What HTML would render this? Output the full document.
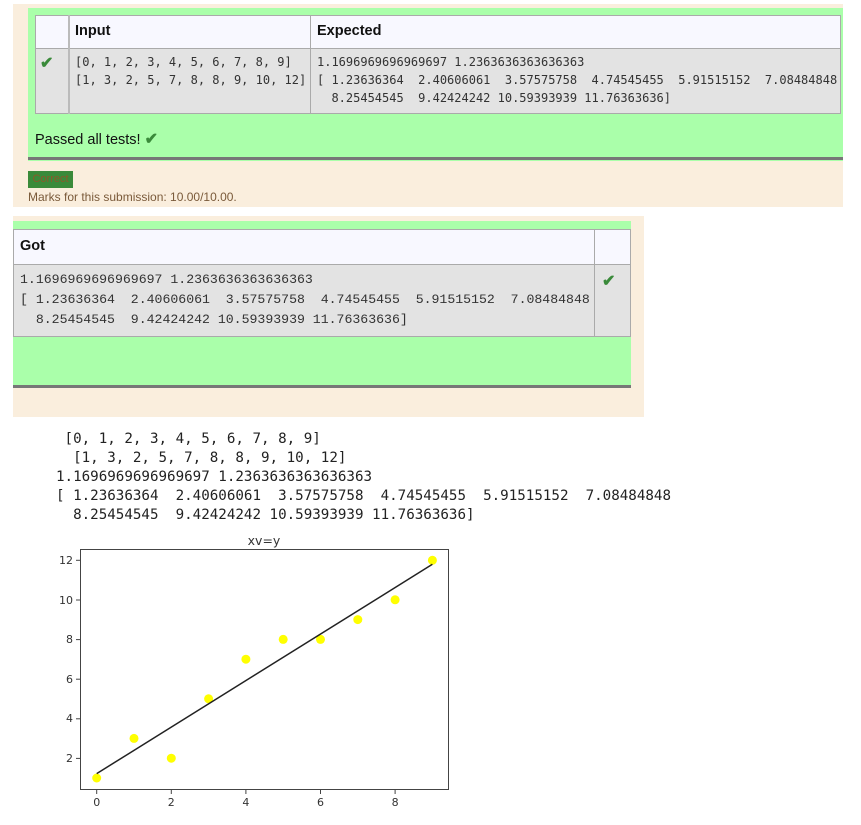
<!DOCTYPE html>
<html><head><meta charset="utf-8"><style>
*{margin:0;padding:0;box-sizing:border-box}
body{width:861px;height:825px;background:#fff;position:relative;overflow:hidden;font-family:"Liberation Sans",sans-serif}
.abs{position:absolute}
.mono{font-family:"DejaVu Sans Mono","Liberation Mono",monospace;white-space:pre}
.tm{font-size:12px;line-height:18px;color:#333}
.hdr{font-weight:bold;font-size:14.5px;color:#111}
.ck{color:#3a8a3a;font-size:16px;font-weight:bold}
</style></head><body>
<div class="abs" style="left:13px;top:4px;width:830px;height:203px;background:#faeedd"></div>
<div class="abs" style="left:28px;top:8px;width:815px;height:153px;background:#aaffaa"></div>
<div class="abs" style="left:28px;top:157px;width:815px;height:3px;background:#777"></div>
<div class="abs" style="left:35px;top:15px;width:806px;height:34px;background:#f8f8ff;border:1px solid #aaa"></div>
<div class="abs" style="left:35px;top:48px;width:806px;height:66px;background:#e3e3e3;border:1px solid #aaa"></div>
<div class="abs" style="left:68px;top:15px;width:2px;height:99px;background:#bbb"></div>
<div class="abs" style="left:310px;top:15px;width:1px;height:99px;background:#aaa"></div>
<div class="abs hdr" style="left:75px;top:23px">Input</div>
<div class="abs hdr" style="left:317px;top:23px">Expected</div>
<div class="abs ck" style="left:40px;top:53px">✔</div>
<div class="abs mono tm" style="left:75px;top:53px">[0, 1, 2, 3, 4, 5, 6, 7, 8, 9]
[1, 3, 2, 5, 7, 8, 8, 9, 10, 12]</div>
<div class="abs mono tm" style="left:317px;top:53px">1.1696969696969697 1.2363636363636363
[ 1.23636364  2.40606061  3.57575758  4.74545455  5.91515152  7.08484848
  8.25454545  9.42424242 10.59393939 11.76363636]</div>
<div class="abs" style="left:35px;top:129px;font-size:14.5px;color:#111">Passed all tests! <span class="ck">✔</span></div>
<div class="abs" style="left:28px;top:171px;width:45px;height:17px;background:#3a8a3a;color:#8a5a2a;font-size:11px;line-height:17px;text-align:center">Correct</div>
<div class="abs" style="left:28px;top:190px;font-size:12px;color:#7a5a3a">Marks for this submission: 10.00/10.00.</div>
<div class="abs" style="left:13px;top:216px;width:631px;height:201px;background:#faeedd"></div>
<div class="abs" style="left:13px;top:221px;width:618px;height:167px;background:#aaffaa"></div>
<div class="abs" style="left:13px;top:385px;width:618px;height:3px;background:#777"></div>
<div class="abs" style="left:13px;top:229px;width:618px;height:36px;background:#f8f8ff;border:1px solid #aaa"></div>
<div class="abs" style="left:13px;top:264px;width:618px;height:73px;background:#e3e3e3;border:1px solid #aaa"></div>
<div class="abs" style="left:594px;top:229px;width:1px;height:108px;background:#aaa"></div>
<div class="abs hdr" style="left:20px;top:238px">Got</div>
<div class="abs ck" style="left:602px;top:271px">✔</div>
<div class="abs" style="left:20px;top:270px;font-family:'Liberation Mono',monospace;white-space:pre;font-size:13.2px;line-height:20px;color:#333">1.1696969696969697 1.2363636363636363
[ 1.23636364  2.40606061  3.57575758  4.74545455  5.91515152  7.08484848
  8.25454545  9.42424242 10.59393939 11.76363636]</div>
<div class="abs mono" style="left:56px;top:430px;font-size:14.2px;line-height:19px;color:#222"> [0, 1, 2, 3, 4, 5, 6, 7, 8, 9]
  [1, 3, 2, 5, 7, 8, 8, 9, 10, 12]
1.1696969696969697 1.2363636363636363
[ 1.23636364  2.40606061  3.57575758  4.74545455  5.91515152  7.08484848
  8.25454545  9.42424242 10.59393939 11.76363636]</div>
<svg class="abs" style="left:0;top:0" width="861" height="825" font-family="DejaVu Sans, sans-serif" font-size="11" fill="#333">
<text x="264" y="545" text-anchor="middle" font-size="12.5">xv=y</text>
<rect x="80.5" y="549.5" width="368" height="240" fill="none" stroke="#444" stroke-width="1"/>
<g stroke="#444">
<line x1="76" y1="560.3" x2="80" y2="560.3"/><line x1="76" y1="600" x2="80" y2="600"/><line x1="76" y1="639.6" x2="80" y2="639.6"/><line x1="76" y1="679.2" x2="80" y2="679.2"/><line x1="76" y1="718.8" x2="80" y2="718.8"/><line x1="76" y1="758.4" x2="80" y2="758.4"/>
<line x1="96.7" y1="790" x2="96.7" y2="794"/><line x1="171.3" y1="790" x2="171.3" y2="794"/><line x1="245.9" y1="790" x2="245.9" y2="794"/><line x1="320.5" y1="790" x2="320.5" y2="794"/><line x1="395.1" y1="790" x2="395.1" y2="794"/>
</g>
<g text-anchor="end"><text x="73" y="564">12</text><text x="73" y="604">10</text><text x="73" y="643">8</text><text x="73" y="683">6</text><text x="73" y="722">4</text><text x="73" y="762">2</text></g>
<g text-anchor="middle"><text x="96.7" y="806">0</text><text x="171.3" y="806">2</text><text x="245.9" y="806">4</text><text x="320.5" y="806">6</text><text x="395.1" y="806">8</text></g>
<g fill="#ffff00">
<circle cx="96.7" cy="778" r="4.5"/><circle cx="134" cy="738.4" r="4.5"/><circle cx="171.3" cy="758.2" r="4.5"/><circle cx="208.6" cy="698.8" r="4.5"/><circle cx="245.9" cy="659.2" r="4.5"/><circle cx="283.2" cy="639.4" r="4.5"/><circle cx="320.5" cy="639.4" r="4.5"/><circle cx="357.8" cy="619.6" r="4.5"/><circle cx="395.1" cy="599.8" r="4.5"/><circle cx="432.4" cy="560.3" r="4.5"/>
</g>
<line x1="96.7" y1="773.6" x2="432.4" y2="564.3" stroke="#222" stroke-width="1.5"/>
</svg>
</body></html>
